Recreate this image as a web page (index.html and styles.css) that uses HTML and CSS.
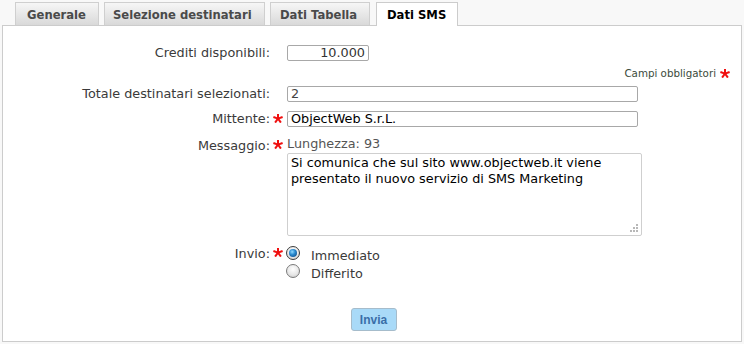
FILE: index.html
```html
<!DOCTYPE html>
<html lang="it">
<head>
<meta charset="utf-8">
<title>Dati SMS</title>
<link rel="stylesheet" href="styles.css">
</head>
<body>
<div class="tabs">
  <div class="tab tab-generale">Generale</div>
  <div class="tab tab-selezione">Selezione destinatari</div>
  <div class="tab tab-tabella">Dati Tabella</div>
  <div class="tab tab-sms active">Dati SMS</div>
</div>
<div class="panel">
  <div class="row row-crediti">
    <div class="label">Crediti disponibili:</div>
    <div class="star"></div>
    <div class="field"><div class="input input-short">10.000</div></div>
  </div>
  <div class="required-note">Campi obbligatori <svg class="req" width="10" height="9" viewBox="0 0 10 9"><g stroke="#f01010" stroke-width="2"><line x1="5" y1="4.6" x2="5" y2="0"/><line x1="5" y1="4.6" x2="9.6" y2="3"/><line x1="5" y1="4.6" x2="7.9" y2="8.6"/><line x1="5" y1="4.6" x2="2.1" y2="8.6"/><line x1="5" y1="4.6" x2="0.4" y2="3"/></g></svg></div>
  <div class="row row-totale">
    <div class="label">Totale destinatari selezionati:</div>
    <div class="star"></div>
    <div class="field"><div class="input input-long gray">2</div></div>
  </div>
  <div class="row row-mittente">
    <div class="label">Mittente:</div>
    <div class="star"><svg class="req" width="10" height="9" viewBox="0 0 10 9"><g stroke="#f01010" stroke-width="2"><line x1="5" y1="4.6" x2="5" y2="0"/><line x1="5" y1="4.6" x2="9.6" y2="3"/><line x1="5" y1="4.6" x2="7.9" y2="8.6"/><line x1="5" y1="4.6" x2="2.1" y2="8.6"/><line x1="5" y1="4.6" x2="0.4" y2="3"/></g></svg></div>
    <div class="field"><div class="input input-long">ObjectWeb S.r.L.</div></div>
  </div>
  <div class="row row-messaggio">
    <div class="label">Messaggio:</div>
    <div class="star"><svg class="req" width="10" height="9" viewBox="0 0 10 9"><g stroke="#f01010" stroke-width="2"><line x1="5" y1="4.6" x2="5" y2="0"/><line x1="5" y1="4.6" x2="9.6" y2="3"/><line x1="5" y1="4.6" x2="7.9" y2="8.6"/><line x1="5" y1="4.6" x2="2.1" y2="8.6"/><line x1="5" y1="4.6" x2="0.4" y2="3"/></g></svg></div>
    <div class="field">
      <div class="length">Lunghezza: 93</div>
      <div class="textarea">Si comunica che sul sito www.objectweb.it viene<br>presentato il nuovo servizio di SMS Marketing
        <svg class="grip" width="9" height="9" viewBox="0 0 9 9"><rect x="7" y="1" width="2" height="2" fill="#b8b8b8"/><rect x="4" y="4" width="2" height="2" fill="#b8b8b8"/><rect x="7" y="4" width="2" height="2" fill="#b8b8b8"/><rect x="1" y="7" width="2" height="2" fill="#b8b8b8"/><rect x="4" y="7" width="2" height="2" fill="#b8b8b8"/><rect x="7" y="7" width="2" height="2" fill="#b8b8b8"/></svg>
      </div>
    </div>
  </div>
  <div class="row row-invio">
    <div class="label">Invio:</div>
    <div class="star"><svg class="req" width="10" height="9" viewBox="0 0 10 9"><g stroke="#f01010" stroke-width="2"><line x1="5" y1="4.6" x2="5" y2="0"/><line x1="5" y1="4.6" x2="9.6" y2="3"/><line x1="5" y1="4.6" x2="7.9" y2="8.6"/><line x1="5" y1="4.6" x2="2.1" y2="8.6"/><line x1="5" y1="4.6" x2="0.4" y2="3"/></g></svg></div>
    <div class="field radios">
      <div class="radio-line"><span class="radio checked"></span><span class="radio-label">Immediato</span></div>
      <div class="radio-line"><span class="radio"></span><span class="radio-label">Differito</span></div>
    </div>
  </div>
  <div class="actions"><button class="btn" type="button">Invia</button></div>
</div>
</body>
</html>
```
FILE: styles.css
```css
html, body {
  margin: 0;
  padding: 0;
  background: #f8f8f8;
}
body {
  font-family: "DejaVu Sans", Verdana, sans-serif;
  font-size: 12.8px;
  color: #3a3a3a;
  width: 744px;
  height: 344px;
  overflow: hidden;
}
.tabs {
  display: flex;
  padding: 2px 0 0 15px;
  height: 23px;
  gap: 5px;
  position: relative;
  z-index: 1;
}
.tab {
  box-sizing: border-box;
  height: 23px;
  border: 1px solid #cfcfcf;
  border-bottom: none;
  background: linear-gradient(#f6f6f6, #d9d9d9);
  font-weight: bold;
  font-size: 11.6px;
  color: #4a4a4a;
  padding: 5px 0 0 11px;
  white-space: nowrap;
  overflow: hidden;
}
.tab-generale { width: 84px; }
.tab-selezione { width: 161px; padding-left: 8px; }
.tab-tabella { width: 100px; padding-left: 9px; }
.tab-sms { width: 82px; padding-left: 10px; }
.tab.active {
  margin-left: 1px;
  height: 24px;
  background: #fff;
  color: #000;
  border-color: #cccccc;
}
.panel {
  margin: 0 2px;
  height: 317px;
  box-sizing: border-box;
  border: 1px solid #cccccc;
  background: #fff;
}
.row {
  display: grid;
  grid-template-columns: 267px 17px 360px;
  align-items: start;
}
.label {
  text-align: right;
  white-space: nowrap;
  line-height: 15px;
}
.star {
  padding-left: 3px;
}
.star .req {
  display: block;
  margin-top: 3px;
}
.input {
  box-sizing: border-box;
  height: 16px;
  border: 1px solid #a8a8a8;
  border-radius: 2px;
  padding: 0 3px;
  line-height: 14px;
  color: #000;
  background: #fff;
  white-space: nowrap;
}
.input.gray { color: #444; }
.input-short {
  width: 82px;
  text-align: right;
  color: #333;
}
.input-long {
  width: 351px;
}
.row-crediti { margin-top: 19px; }
.required-note {
  display: flex;
  justify-content: flex-end;
  align-items: center;
  gap: 4px;
  font-size: 10.3px;
  color: #3b4a3b;
  padding-right: 11px;
  margin-top: 6px;
  line-height: 12px;
  height: 12px;
}
.row-totale { margin-top: 7px; }
.row-mittente { margin-top: 9px; }
.row-messaggio { margin-top: 11px; }
.length {
  color: #555;
  line-height: 12px;
  margin-bottom: 3px;
}
.textarea {
  position: relative;
  box-sizing: border-box;
  width: 355px;
  height: 83px;
  border: 1px solid #cfcfcf;
  border-radius: 2px;
  padding: 1px 3px;
  color: #000;
  line-height: 16px;
}
.grip {
  position: absolute;
  right: 3px;
  bottom: 3px;
}
.row-invio { margin-top: 10px; }
.row-invio .star .req { margin-top: 2px; }
.row-messaggio .star .req { margin-top: 2px; }
.radios { margin-left: -1px; }
.radio-line {
  display: flex;
  align-items: flex-start;
  height: 18px;
}
.radio {
  box-sizing: border-box;
  width: 14px;
  height: 14px;
  border-radius: 50%;
  border: 1px solid #7a7a7a;
  background: radial-gradient(circle at 50% 35%, #ffffff 0%, #e8e8e8 55%, #c8c8c8 100%);
  position: relative;
  flex: none;
}
.radio.checked {
  border-color: #3c3c3c;
}
.radio.checked::after {
  content: "";
  position: absolute;
  left: 2px;
  top: 2px;
  width: 8px;
  height: 8px;
  border-radius: 50%;
  background: radial-gradient(circle at 40% 35%, #8fd8ff 0%, #2a8bd0 40%, #0a3f7a 100%);
}
.radio-label {
  margin-left: 11px;
  margin-top: 3px;
  line-height: 14px;
}
.actions {
  display: flex;
  justify-content: center;
  margin-top: 26px;
}
.btn {
  width: 46px;
  height: 23px;
  border: 1px solid #a6bccb;
  border-radius: 3px;
  background: #a9daf8;
  font-family: "Liberation Sans", Arial, sans-serif;
  font-weight: bold;
  font-size: 12px;
  color: #3a6ea8;
  padding: 0;
  margin-left: 3px;
}
```
